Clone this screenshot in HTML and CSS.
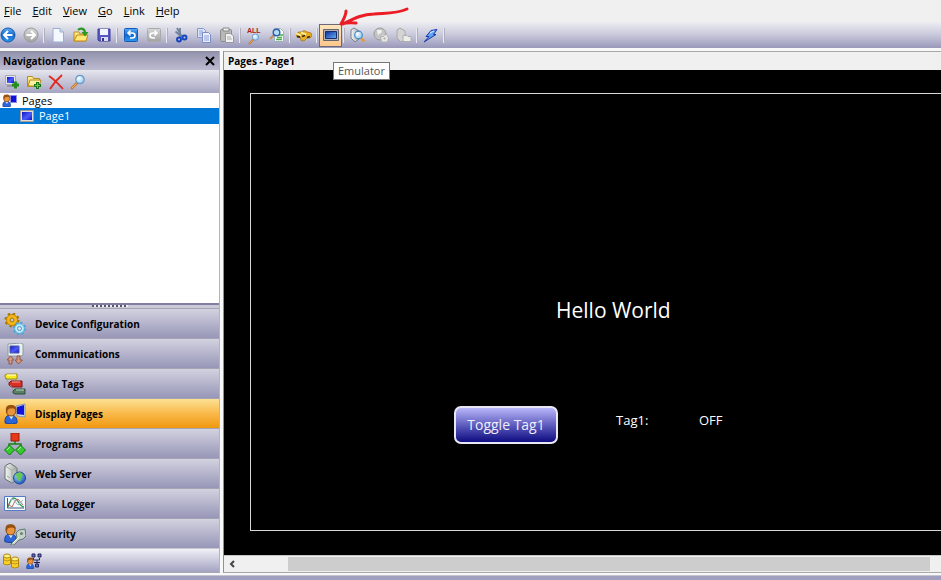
FILE: index.html
```html
<!DOCTYPE html>
<html lang="en">
<head>
<meta charset="utf-8">
<title>Pages - Page1</title>
<link rel="stylesheet" href="styles.css">
</head>
<body>
<svg class="defs" aria-hidden="true">
  <defs>
    <linearGradient id="gBlue" x1="0" y1="0" x2="0" y2="1"><stop offset="0" stop-color="#5aaef5"/><stop offset=".5" stop-color="#1568d0"/><stop offset="1" stop-color="#2a9af0"/></linearGradient>
    <linearGradient id="gGray" x1="0" y1="0" x2="0" y2="1"><stop offset="0" stop-color="#d8d8d8"/><stop offset="1" stop-color="#a2a2a2"/></linearGradient>
    <linearGradient id="gScreen" x1="0" y1="0" x2="1" y2="1"><stop offset="0" stop-color="#1212c8"/><stop offset=".55" stop-color="#4a5cf8"/><stop offset="1" stop-color="#1010d0"/></linearGradient>
    <linearGradient id="gEmu" x1="0" y1="0" x2="1" y2="1"><stop offset="0" stop-color="#0a2c9c"/><stop offset="1" stop-color="#68b0f4"/></linearGradient>
    <linearGradient id="gFolder" x1="0" y1="0" x2="0" y2="1"><stop offset="0" stop-color="#fff3a0"/><stop offset="1" stop-color="#f0c030"/></linearGradient>
    <linearGradient id="gStone" x1="0" y1="0" x2="1" y2="0"><stop offset="0" stop-color="#f4f6f4"/><stop offset="1" stop-color="#a4aca8"/></linearGradient>
    <radialGradient id="gGlobe" cx=".35" cy=".3" r=".8"><stop offset="0" stop-color="#9cd4ff"/><stop offset="1" stop-color="#1450b8"/></radialGradient>
    <radialGradient id="gLens" cx=".35" cy=".35" r=".7"><stop offset="0" stop-color="#ffffff"/><stop offset="1" stop-color="#8cc8f0"/></radialGradient>
  </defs>
  <symbol id="lens" viewBox="0 0 16 16"><path d="M7 9 2 14" stroke="#c87830" stroke-width="2.6" stroke-linecap="round"/><path d="M6.5 9.5 2 14" stroke="#f4b868" stroke-width="1"/><circle cx="10" cy="5.5" r="4.2" fill="url(#gLens)" stroke="#6898c8" stroke-width="1.2"/></symbol>
  <symbol id="person" viewBox="0 0 16 22"><path d="M1 21c-1-6 2-9 6-9s8 3 7 9q-7 2-13 0Z" fill="#2c66d8" stroke="#123c94"/><path d="m5 13 3 4 2-4Z" fill="#dcecff"/><circle cx="7.5" cy="8" r="5.2" fill="#e8953c" stroke="#7c4010"/><path d="M2 8C1 2 4 1 8 1s6 3 5.400 6Q11 4 7 5 3 5 3.500 10Z" fill="#96500f"/></symbol>
</svg>

<nav class="menu" aria-label="Main menu">
  <a href="#"><u>F</u>ile</a><a href="#"><u>E</u>dit</a><a href="#"><u>V</u>iew</a><a href="#"><u>G</u>o</a><a href="#"><u>L</u>ink</a><a href="#"><u>H</u>elp</a>
</nav>

<div class="toolbar" role="toolbar" aria-label="Standard">
  <button aria-label="Back"><svg viewBox="0 0 16 16"><circle cx="8" cy="8" r="7" fill="url(#gBlue)" stroke="#1558a8"/><path d="M12.500 8H4M8 4 4 8l4 4" stroke="#fff" stroke-width="2" fill="none"/></svg></button>
  <button aria-label="Forward"><svg viewBox="0 0 16 16"><circle cx="8" cy="8" r="7" fill="url(#gGray)" stroke="#999"/><path d="M3.500 8H12M8 4l4 4-4 4" stroke="#fff" stroke-width="2" fill="none"/></svg></button>
  <span class="sep"></span>
  <button aria-label="New"><svg viewBox="0 0 16 16"><path d="M3 1.500h7l3.500 3.500v10H3Z" fill="#f4f9ff" stroke="#9aafd0"/><path d="M10 1.500V5h3.500" fill="#c6dcf4" stroke="#9aafd0"/></svg></button>
  <button aria-label="Open"><svg viewBox="0 0 16 16"><path d="M1 14V5h5l1 2h6v7Z" fill="url(#gFolder)" stroke="#c08c18"/><path d="m1 14 3-6h11l-2 6Z" fill="#ffe878" stroke="#c08c18"/><path d="M5 3c3-3 7-1 7 3" fill="none" stroke="#2c9a20" stroke-width="2.200"/><path d="M8.500 5H15.500L12 9.500Z" fill="#2c9a20"/></svg></button>
  <button aria-label="Save"><svg viewBox="0 0 16 16"><path d="M2 2h12v12H3l-1-1Z" fill="#5658c4" stroke="#3c3c98"/><path d="M4 2h8v6H4Z" fill="#f2f4ff"/><path d="M5 10h7v4H5Z" fill="#d8daf0"/><path d="M6 11h2v3H6Z" fill="#34348c"/></svg></button>
  <span class="sep"></span>
  <button aria-label="Undo"><svg viewBox="0 0 16 16"><rect x="1.500" y="1.500" width="13" height="13" rx="1" fill="url(#gBlue)" stroke="#1558b8"/><path d="M5 6h4q3 0 3 2.500T9 11H7M7.500 3.500 5 6l2.500 2.500" fill="none" stroke="#fff" stroke-width="1.600"/></svg></button>
  <button aria-label="Redo"><svg viewBox="0 0 16 16"><rect x="1.500" y="1.500" width="13" height="13" rx="1" fill="url(#gGray)" stroke="#aaa"/><path d="M11 6H7Q4 6 4 8.500T7 11h2M8.500 3.500 11 6 8.500 8.500" fill="none" stroke="#fff" stroke-width="1.600"/></svg></button>
  <span class="sep"></span>
  <button aria-label="Cut"><svg viewBox="0 0 16 16"><path d="m4 1 5 9M7 1v9M2.500 4.500 9 10" stroke="#70829c" stroke-width="1.800"/><circle cx="6" cy="12.500" r="2" fill="none" stroke="#1446c0" stroke-width="1.900"/><circle cx="11.500" cy="10.500" r="2" fill="none" stroke="#1446c0" stroke-width="1.900"/></svg></button>
  <button aria-label="Copy"><svg viewBox="0 0 16 16"><path d="M1.500 1.500h6l2 2v7h-8Z" fill="#dce6fb" stroke="#8494cc"/><path d="M3 4h4M3 6h4M3 8h3" stroke="#8ca0d8"/><path d="M6.500 5.500h6l2 2v8h-8Z" fill="#eaf0ff" stroke="#7c8cc8"/><path d="M8 9h5M8 11h5M8 13h5" stroke="#8ca0d8"/></svg></button>
  <button aria-label="Paste"><svg viewBox="0 0 16 16"><rect x="1.500" y="2.500" width="11" height="12" rx="1" fill="#b8b8b8" stroke="#8c8c8c"/><path d="M4 1h6v3H4Z" fill="#eee" stroke="#888"/><path d="M6.500 6.500h5l3 2.500v6.500h-8Z" fill="#f2f2f2" stroke="#999"/><path d="M8 10h4M8 12h5" stroke="#aaa"/></svg></button>
  <span class="sep"></span>
  <button class="all" aria-label="Find all"><span>ALL</span><svg viewBox="0 0 16 16"><use href="#lens"/></svg></button>
  <button aria-label="Find in page"><svg viewBox="0 0 16 16"><path d="M5.500 1.500h6l3 3v10h-9Z" fill="#f4faf6" stroke="#9cb0bc"/><path d="M10 8h4M8 10.500h5M7 12.500h6" stroke="#4cac50" stroke-width="1.400"/><path d="M5 8 1 12" stroke="#c09060" stroke-width="2"/><circle cx="7.500" cy="5.500" r="3.300" fill="#b4dcf8" stroke="#2c60a8" stroke-width="1.400"/></svg></button>
  <span class="sep"></span>
  <button aria-label="Search database"><svg viewBox="0 0 16 16"><path d="m0 7 3-2h3l2-1.500 3 1.500 4 1 1 3-2 2h-3l-3 3-3-.500L4 10 0 9Z" fill="#e8b020" stroke="#a87414" stroke-width=".8"/><path d="M0 6.500 5 8.500M5 5.500l5 2" stroke="#fff4b0" stroke-width="1.600"/><path d="m1 9.500 3 .5M6 9.500l3-1M11 10.500l3-1" stroke="#3c2c10" stroke-width="1.800"/></svg></button>
  <span class="sep"></span>
  <button class="active" aria-label="Emulator"><svg viewBox="0 0 16 16"><path d="M.5 2.500h15v11H.500Z" fill="#b4b4b8" stroke="#64646c"/><path d="M2.500 4.500h11v7h-11Z" fill="url(#gEmu)" stroke="#182c6c"/></svg></button>
  <span class="sep"></span>
  <button aria-label="Preview"><svg viewBox="0 0 16 16"><path d="m1 3 3-2 5 3v8l-4 3-4-4Z" fill="url(#gStone)" stroke="#78808c"/><path d="m11 11 3.500 3.500" stroke="#e09c40" stroke-width="2.500"/><circle cx="8.500" cy="8" r="3.800" fill="url(#gLens)" stroke="#4888c0" stroke-width="1.200"/></svg></button>
  <button aria-label="Web"><svg viewBox="0 0 16 16"><circle cx="7" cy="7" r="6" fill="#c6c6c6" stroke="#9a9a9a"/><path d="M4 3h4l1 2-4 3ZM9 8h3l-1 3Z" fill="#f2f2f2"/><path d="M7.500 9.500h3l1-2h2l2 3-1 4.500h-6Z" fill="#e6e6e6" stroke="#b0b0b0"/><circle cx="11.500" cy="11.500" r="1" fill="#aaa"/></svg></button>
  <button aria-label="Device"><svg viewBox="0 0 16 16"><path d="m1 3 3-2 5 3v8l-4 3-4-4Z" fill="#d4d4d4" stroke="#a8a8a8"/><path d="M7 8.500h4l1 1h3v5H7Z" fill="#ececec" stroke="#b0b0b0"/></svg></button>
  <span class="sep"></span>
  <button aria-label="Connect"><svg viewBox="0 0 16 16"><path d="M1 15 6 9.500H3l5-6 6-1-3.500 5h2.500Z" fill="#60a4f4" stroke="#1a3ca8" stroke-linejoin="round"/><path d="m7 6 4-2" stroke="#dcefff"/></svg></button>
  <span class="sep"></span>
</div>

<main class="workspace">
  <aside class="pane">
    <header class="pane-title"><h2>Navigation Pane</h2><button aria-label="Close"><svg viewBox="0 0 10 10"><path d="m1 1 8 8M9 1 1 9" stroke="#000" stroke-width="2"/></svg></button></header>
    <div class="pane-tools">
      <button aria-label="New page"><svg viewBox="0 0 16 16"><path d="M1.500 1.500h10v9h-10Z" fill="#e8e8f0" stroke="#a8a8b0"/><path d="M3 3h7v6H3Z" fill="url(#gScreen)"/><path d="M3 12h6" stroke="#999" stroke-width="2"/><path d="M11.500 7.500v7M8 11h7" stroke="#258c24" stroke-width="3"/></svg></button>
      <button aria-label="New folder"><svg viewBox="0 0 16 16"><path d="M1.500 12.500v-10h5l1 2h6v8Z" fill="url(#gFolder)" stroke="#b48c20"/><path d="m2 12 2-6h11l-2 6Z" fill="#fff0a0" stroke="#b48c20"/><path d="M11.500 8v7M8 11.500h7" stroke="#187818" stroke-width="3"/><path d="M11.500 9v5M9 11.500h5" stroke="#70c858"/></svg></button>
      <button aria-label="Delete"><svg viewBox="0 0 16 16"><path d="M1 2q6 4 14 13M14 1Q7 7 2 15" fill="none" stroke="#e0281c" stroke-width="1.800"/></svg></button>
      <button aria-label="Find"><svg viewBox="0 0 16 16"><use href="#lens"/></svg></button>
    </div>
    <ul class="tree">
      <li><svg viewBox="0 0 16 13"><path d="M8.500 1.500h6v7h-6Z" fill="#1010d8" stroke="#8c8ce8"/><use href="#person" x="-1" y="0" width="12" height="13"/></svg>Pages</li>
      <li class="child selected"><svg viewBox="0 0 16 13"><path d="M1.500.500h13v11h-13Z" fill="#ddd" stroke="#a89c90"/><path d="M3 2h10v8H3Z" fill="url(#gScreen)"/></svg>Page1</li>
    </ul>
    <div class="splitter"><i></i></div>
    <nav class="sections" aria-label="Sections">
      <button><svg viewBox="0 0 22 22"><circle cx="8" cy="7" r="6" fill="none" stroke="#a87400" stroke-width="3" stroke-dasharray="2.300 2.400"/><circle cx="8" cy="7" r="5.500" fill="#f4b818" stroke="#bc8408"/><circle cx="8" cy="7" r="2" fill="#c8c4d4" stroke="#a87400"/><circle cx="15.500" cy="15.500" r="5.400" fill="none" stroke="#4ca4d4" stroke-width="2.800" stroke-dasharray="2.100 2.130"/><circle cx="15.500" cy="15.500" r="4.800" fill="#bcecff" stroke="#54b0e0"/><circle cx="15.500" cy="15.500" r="2" fill="#e4e4ee" stroke="#4494c4"/></svg>Device Configuration</button>
      <button><svg viewBox="0 0 22 22"><path d="m4 1 13-1 2 1v11l-2 1H4Z" fill="#e8f0f0" stroke="#8c9c9c"/><path d="M6 3h9v7H6Z" fill="url(#gScreen)" stroke="#4858a8"/><path d="m6.500 13 3.500 4H8v4H5v-4H3ZM14.500 21 11 17h2v-4h3v4h2.500Z" fill="#d49880" stroke="#985840"/></svg>Communications</button>
      <button><svg viewBox="0 0 22 22"><path d="m1 2 2-1h10v5H3L1 4Z" fill="#f8ea20" stroke="#9c8c10"/><path d="M3 2h9" stroke="#fff" /><path d="m1 5 4 5" stroke="#999"/><path d="m5 10 2-2h11v6H7l-2-2Z" fill="#d83028" stroke="#841410"/><path d="M8 9h8" stroke="#ffa090"/><path d="m6 12 4 6" stroke="#999"/><path d="m9 18 2-2h10v5H11l-2-1Z" fill="#588064" stroke="#304c38"/><path d="M12 17h8" stroke="#b8d8c0"/></svg>Data Tags</button>
      <button class="current"><svg viewBox="0 0 22 22"><path d="m12 3 9-2v13l-8-1Z" fill="#d0d8e0" stroke="#8494b0"/><path d="m13 4 7-2v10l-7-1Z" fill="#1010e0"/><use href="#person" x="0" y="1" width="15" height="20"/></svg>Display Pages</button>
      <button><svg viewBox="0 0 22 22"><path d="M11 7v4M5 15v-4h12v4" fill="none" stroke="#188018" stroke-width="1.500"/><path d="M7 0h8v8H7Z" fill="#e83818" stroke="#94200c"/><path d="m5.500 12 5 5-5 5-5-5ZM16.500 12l5 5-5 5-5-5Z" fill="#38c830" stroke="#147814"/><path d="m3 17 3-3M14 17l3-3" stroke="#a8f898"/></svg>Programs</button>
      <button><svg viewBox="0 0 22 22"><path d="m1 3 5-3 7 5v12l-5 3-7-4Z" fill="url(#gStone)" stroke="#68706c"/><path d="m1 3 7 4v13M8 7l5-2M3 13l3 2" fill="none" stroke="#a0aca4"/><circle cx="15.500" cy="15" r="6" fill="url(#gGlobe)" stroke="#1c4898"/><path d="m12 11 4-2 3 3-2 2-1 5-3-3Z" fill="#68c848"/></svg>Web Server</button>
      <button><svg viewBox="0 0 22 22"><path d="M.500 3.500h21v14H.500Z" fill="#f4fcff" stroke="#5878c8"/><path d="M3.500 5v10H20" fill="none" stroke="#405878"/><path d="M4 14C8 2 10 5 12 6s4 8 8 8" fill="none" stroke="#389850" stroke-width="1.300"/><path d="m4 11 4 3 3-6 3-2 5 6" fill="none" stroke="#c86468"/><path d="m6 7 3-1 5 6 5-5" fill="none" stroke="#94b8cc"/></svg>Data Logger</button>
      <button><svg viewBox="0 0 22 22"><use href="#person" x="0" y="0" width="14" height="20"/><path d="m7 21 6-6-1-5 3-3 6-1 1 7-3 3-4 1-5 5H7Z" fill="#c4d4cc" stroke="#60786c"/><circle cx="17.500" cy="10.500" r="1.600" fill="#708878"/><path d="m9 20 6-6" stroke="#f4fff8"/></svg>Security</button>
    </nav>
    <div class="pane-foot">
      <button aria-label="Database"><svg viewBox="0 0 16 16"><path d="M.500 3v8q3 2 7 0V3M8.500 6v8q3 2 7 0V6" fill="#f8d028" stroke="#b08810"/><ellipse cx="4" cy="3" rx="3.500" ry="2" fill="#fff088" stroke="#b08810"/><ellipse cx="12" cy="6" rx="3.500" ry="2" fill="#fff088" stroke="#b08810"/><path d="M1 7q3 2 6 0M9 10q3 2 6 0" fill="none" stroke="#c09818"/></svg></button>
      <button aria-label="User groups"><svg viewBox="0 0 16 16"><path d="M6 1h3v3H6ZM12 1h3v3h-3ZM9.500 11h3v3h-3Z" fill="#6c6cb8" stroke="#202460"/><path d="M7.500 5v2h6V5M11 7v4M8 9.500h6" fill="none" stroke="#202460"/><use href="#person" x="-1" y="4" width="11" height="12"/></svg></button>
    </div>
  </aside>

  <section class="editor">
    <header class="editor-title"><h1>Pages - Page1</h1></header>
    <div class="stage">
      <div class="screen">
        <span class="item hello">Hello World</span>
        <button class="item toggle">Toggle Tag1</button>
        <span class="item tag">Tag1:</span>
        <span class="item state">OFF</span>
      </div>
    </div>
    <div class="scroll">
      <button aria-label="Scroll left"><svg viewBox="0 0 8 8"><path d="M6 1 3 4l3 3" fill="none" stroke="#444" stroke-width="2"/></svg></button>
      <div class="thumb"></div>
    </div>
  </section>
</main>
<footer class="status"></footer>

<div class="tooltip" role="tooltip">Emulator</div>
<svg class="arrow" viewBox="0 0 72 24" aria-hidden="true"><path d="M69 3C58 8 48 7 36 8 24 8 15 13 5 18M8 5C8 10 5 14 3 18Q11 16 18 17" fill="none" stroke="#ec1c24" stroke-width="3" stroke-linecap="round" stroke-linejoin="round"/></svg>
</body>
</html>
```
FILE: styles.css
```css
* { box-sizing: border-box; }

body {
  margin: 0;
  height: 100vh;
  display: flex;
  flex-direction: column;
  position: relative;
  overflow: hidden;
  background: #f8f8f8;
  color: #000;
  font: 11px/16px "Open Sans", "Noto Sans", sans-serif;
}

button {
  margin: 0;
  padding: 0;
  border: 0;
  background: none;
  color: inherit;
  font: inherit;
}

svg { display: block; }
.defs { position: absolute; width: 0; height: 0; }
h1, h2 { margin: 0; font-size: 10px; font-weight: 700; }

.menu {
  flex: none;
  display: flex;
  gap: 11px;
  height: 22px;
  padding: 3px 4px;
  background: #f0f0f0;
}
.menu a { color: #000; text-decoration: none; }

.toolbar {
  flex: none;
  display: flex;
  align-items: center;
  height: 26px;
  margin-left: -4px;
  background: linear-gradient(#ededf2, #c8c8db 50%, #9998ba);
}
.toolbar button {
  flex: none;
  display: grid;
  place-items: center;
  width: 23px;
  height: 23px;
}
.toolbar svg { width: 16px; height: 16px; }
.toolbar .active {
  border: 1px solid #6c6878;
  background: linear-gradient(#ffe4bc, #fcc88c);
}
.sep {
  flex: none;
  width: 2px;
  height: 15px;
  margin: 0 1px;
  background: #e8e8f0;
  border-right: 1px solid #b0b0bc;
}
.toolbar .all { position: relative; }
.all span {
  position: absolute;
  top: 3px;
  left: 5px;
  z-index: 1;
  color: #b01818;
  font: 700 7px/8px "Liberation Sans", sans-serif;
}
.toolbar .all svg { width: 12px; height: 12px; margin-top: 7px; }

.workspace {
  flex: 1;
  display: flex;
  gap: 3px;
  min-height: 0;
  margin: 3px 0 2px;
}

.pane {
  flex: none;
  width: 220px;
  display: flex;
  flex-direction: column;
  border-right: 1px solid #b4b4bc;
  border-bottom: 1px solid #a8a8b4;
}
.pane-title {
  display: flex;
  align-items: center;
  justify-content: space-between;
  height: 19px;
  padding: 0 4px 0 3px;
  border-top: 1px solid #8c8c9c;
  background: linear-gradient(#9493ae, #bcbbd0);
}
.pane-title svg { width: 10px; height: 10px; }
.pane-tools {
  display: flex;
  align-items: center;
  gap: 6px;
  height: 23px;
  padding: 0 4px;
  background: linear-gradient(#e6e6ee, #a5a4c2);
}
.pane-tools svg { width: 16px; height: 16px; }

.tree {
  flex: 1;
  margin: 0;
  padding: 0;
  list-style: none;
  background: #fff;
}
.tree li {
  display: flex;
  align-items: center;
  gap: 4px;
  height: 15px;
  padding-left: 2px;
}
.tree svg { width: 16px; height: 13px; }
.tree .child { height: 16px; padding-left: 19px; }
.tree .selected { background: #0078d7; color: #fff; }

.splitter {
  height: 5px;
  border-top: 2px solid #7f7ea0;
  background: #c9c9d8;
}
.splitter i {
  display: block;
  width: 36px;
  height: 2px;
  margin: 0 auto;
  background: repeating-linear-gradient(90deg, #55556a 0 2px, #f0f0f6 2px 4px);
}

.sections button {
  display: flex;
  align-items: center;
  gap: 9px;
  width: 100%;
  height: 30px;
  padding: 0 4px;
  border-top: 1px solid #a5a4b5;
  background: linear-gradient(#d3d2e0, #9796b7);
  font-size: 10px;
  font-weight: 700;
  text-align: left;
}
.sections svg { width: 22px; height: 22px; }
.sections .current { background: linear-gradient(#fce193, #f9b94a 50%, #f0970f); }

.pane-foot {
  display: flex;
  align-items: center;
  gap: 7px;
  height: 24px;
  padding: 0 3px;
  border-top: 1px solid #c8c8d0;
  background: linear-gradient(#f0f0f6, #a4a3c2);
}
.pane-foot svg { width: 16px; height: 16px; }

.editor {
  flex: 1;
  display: flex;
  flex-direction: column;
  min-width: 0;
  border-left: 1px solid #909098;
  border-bottom: 1px solid #a8a8a8;
}
.editor-title {
  height: 19px;
  padding: 1px 4px 0;
  border-top: 1px solid #a8a8a8;
  background: #f0f0f0;
}
.stage {
  flex: 1;
  display: flex;
  padding: 23px 0 24px 26px;
  background: #000;
}
.screen {
  flex: 1;
  position: relative;
  border: 1px solid #d8d8d8;
  border-right: 0;
}

/* Objects placed freely on the page canvas */
.item {
  position: absolute;
  color: #fff;
  font-size: 13px;
  line-height: 20px;
  white-space: nowrap;
}
.hello { left: 305px; top: 200px; font-size: 21px; line-height: 32px; }
.toggle {
  left: 203px;
  top: 312px;
  width: 104px;
  height: 38px;
  border: 2px solid #e8e8f4;
  border-radius: 7px;
  background: linear-gradient(#b9b7fa, #5654b8 55%, #0e0c80);
  color: #eeeefc;
  font-size: 14px;
}
.tag { left: 365px; top: 316px; }
.state { left: 448px; top: 316px; }

.scroll {
  display: flex;
  height: 17px;
  padding: 1px 11px 1px 0;
  border-top: 1px solid #c8c8c8;
  background: #f0f0f0;
}
.scroll button { display: grid; place-items: center; width: 16px; margin-right: 48px; }
.scroll svg { width: 8px; height: 8px; }
.thumb { flex: 1; background: #cdcdcd; }

.status { flex: none; height: 5px; border-top: 1px solid #c4c4d0; background: #a09fc0; }

.tooltip {
  position: absolute;
  left: 333px;
  top: 62px;
  padding: 0 4px;
  border: 1px solid #767676;
  background: #fff;
  color: #575757;
}
.arrow { position: absolute; left: 338px; top: 6px; width: 72px; height: 24px; }
```
